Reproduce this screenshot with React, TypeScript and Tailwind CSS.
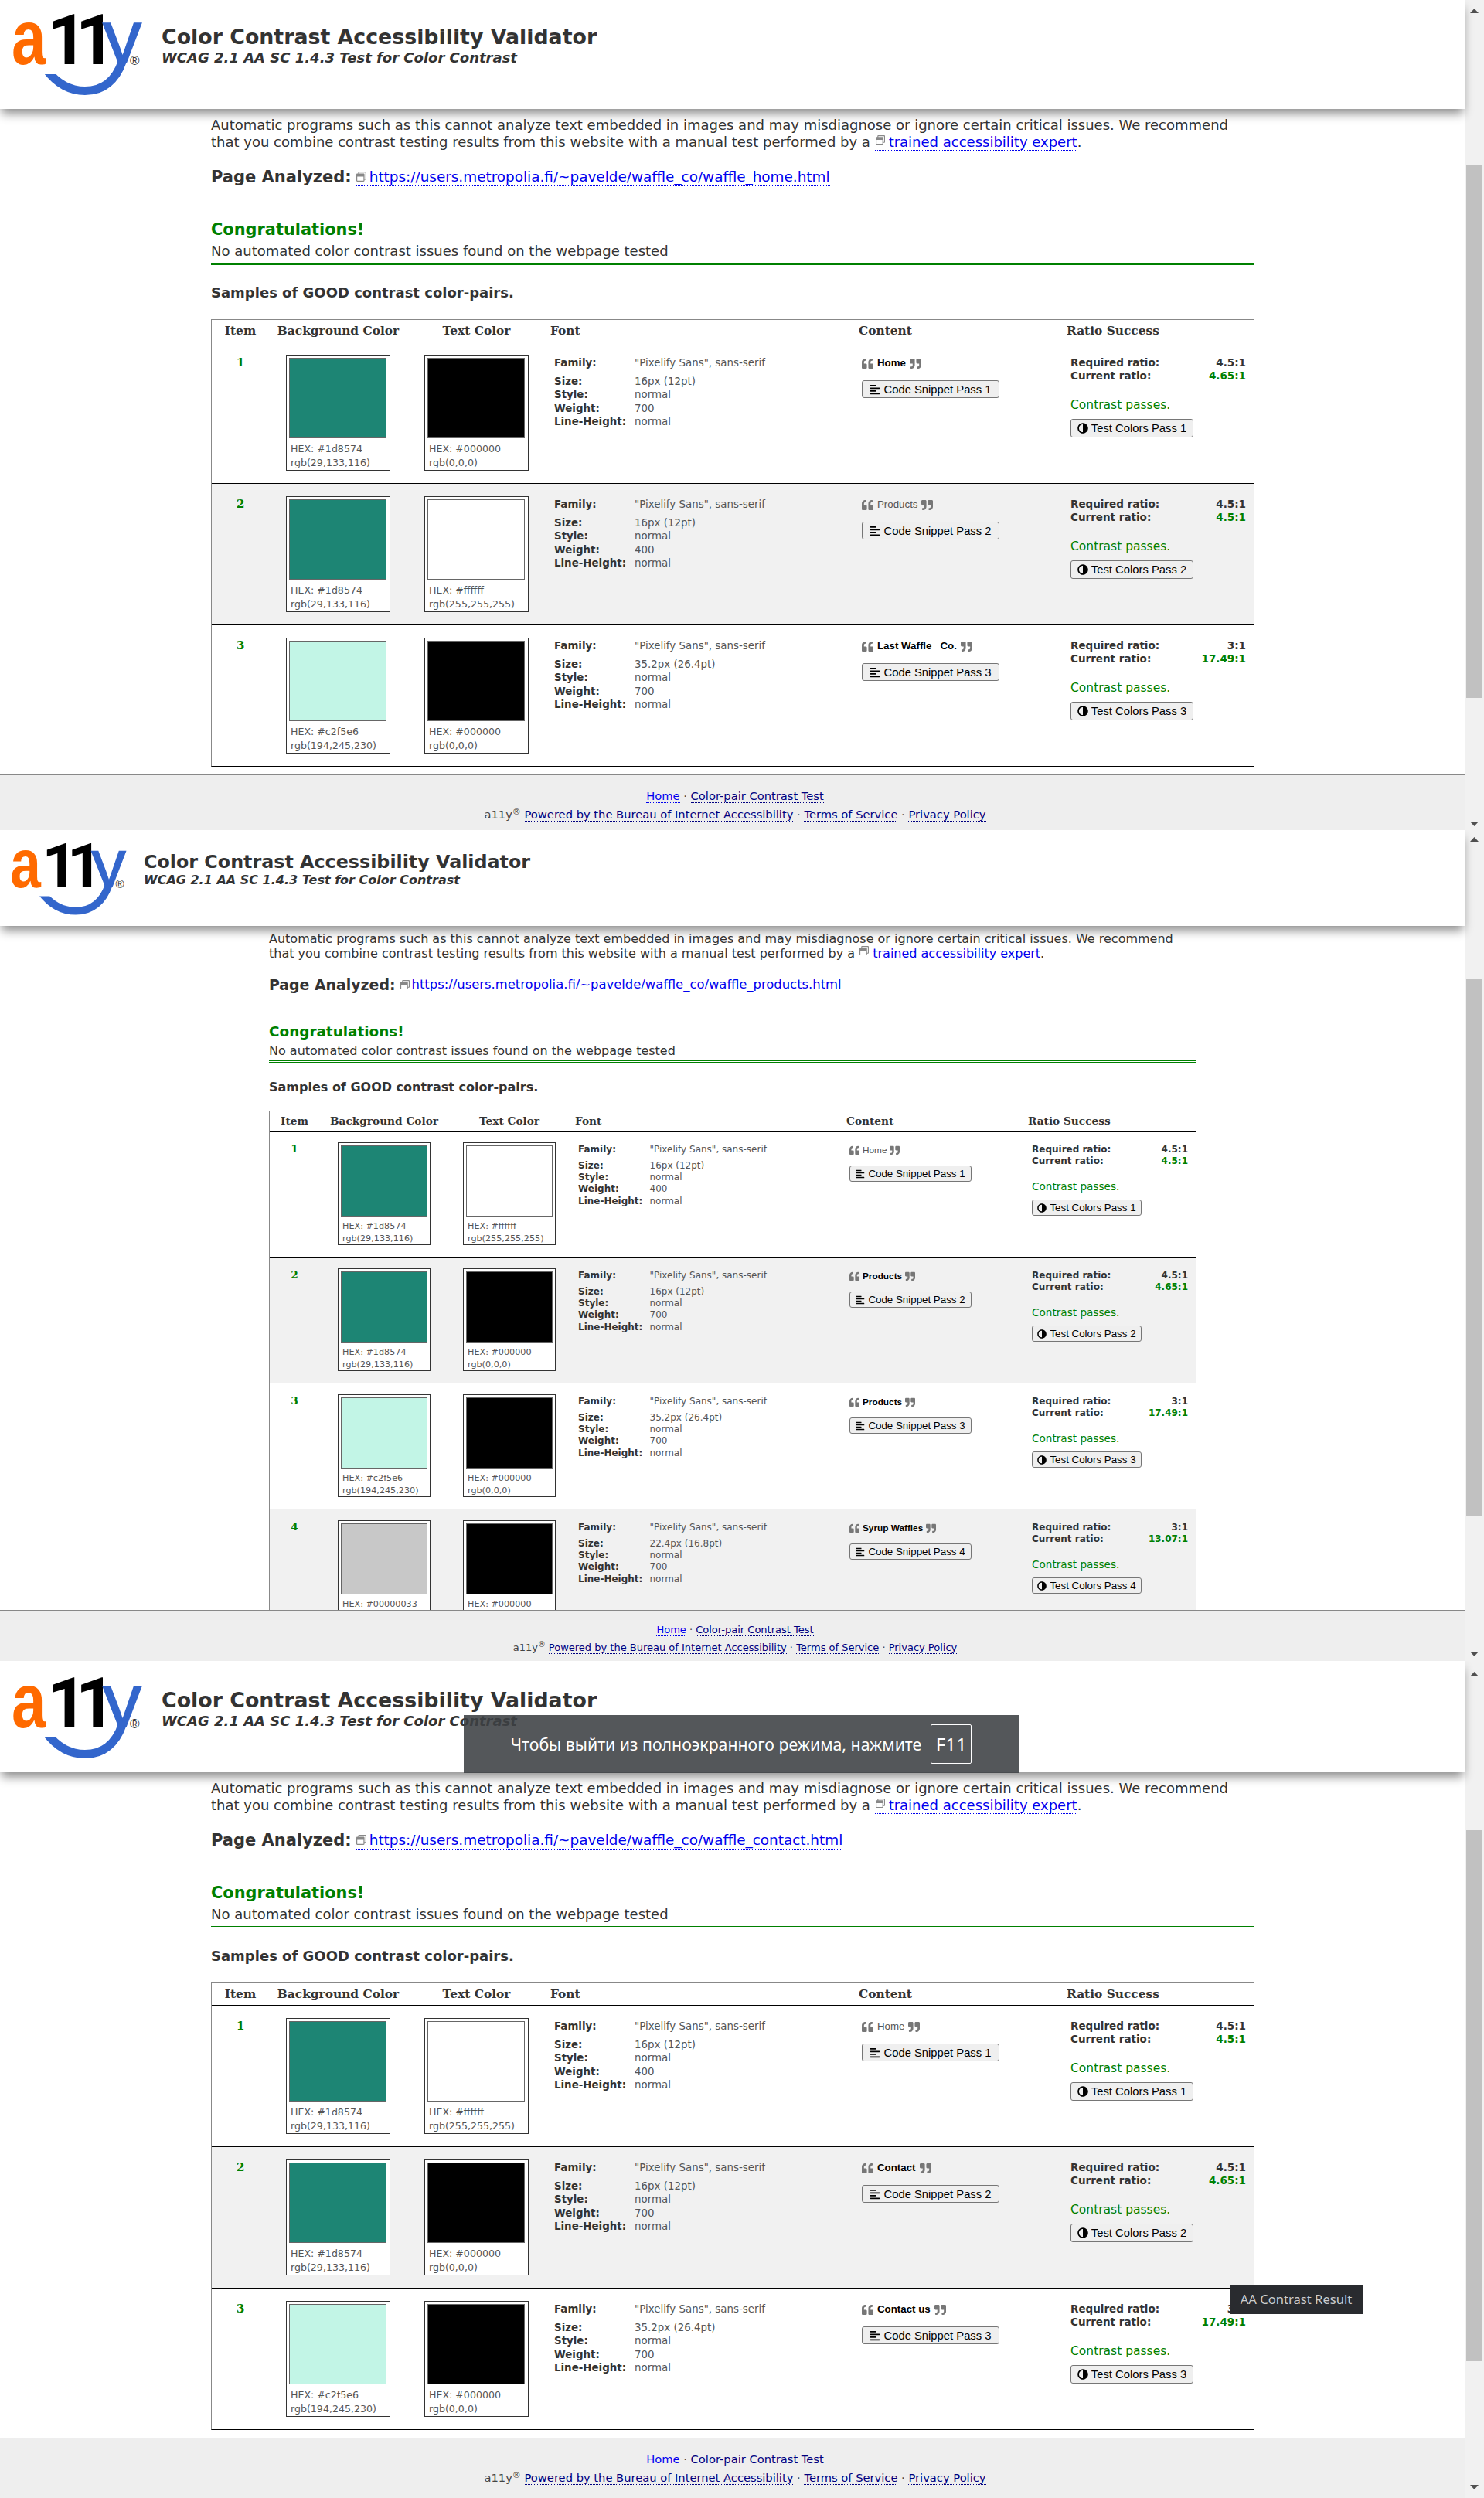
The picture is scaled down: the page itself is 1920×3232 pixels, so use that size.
import React from 'react';
import { FaAdjust, FaAlignLeft, FaQuoteLeft, FaQuoteRight, FaRegWindowRestore } from 'react-icons/fa';

type Sample = {
  bg: string;
  bgHex: string;
  bgRgb: string;
  fg: string;
  fgHex: string;
  fgRgb: string;
  size: string;
  weight: string;
  text: string;
  required: string;
  current: string;
};

const SWATCH_GREEN = { bg: 'bg-[#1d8574]', bgHex: '#1d8574', bgRgb: 'rgb(29,133,116)' };
const SWATCH_MINT = { bg: 'bg-[#c2f5e6]', bgHex: '#c2f5e6', bgRgb: 'rgb(194,245,230)' };
const FG_BLACK = { fg: 'bg-black', fgHex: '#000000', fgRgb: 'rgb(0,0,0)' };
const FG_WHITE = { fg: 'bg-white', fgHex: '#ffffff', fgRgb: 'rgb(255,255,255)' };

const bold16 = (text: string): Sample => ({ ...SWATCH_GREEN, ...FG_BLACK, size: '16px (12pt)', weight: '700', text, required: '4.5:1', current: '4.65:1' });
const plain16 = (text: string): Sample => ({ ...SWATCH_GREEN, ...FG_WHITE, size: '16px (12pt)', weight: '400', text, required: '4.5:1', current: '4.5:1' });
const mint35 = (text: string): Sample => ({ ...SWATCH_MINT, ...FG_BLACK, size: '35.2px (26.4pt)', weight: '700', text, required: '3:1', current: '17.49:1' });

const large = {
  wrap: 'pl-[273px] w-[1350px] pt-[10px] text-[18px] leading-[22px]',
  logo: 'w-[190px] h-[130px]',
  titleBox: 'ml-[19px] pt-[30px]',
  title: 'text-[26.8px] leading-[36px]',
  sub: 'text-[18px] leading-[18px] mt-[0px]',
  analyzed: 'mt-[23px] h-[22px]',
  analyzedLabel: 'text-[21px]',
  analyzedLink: 'text-[18.4px]',
  analyzedIcon: 'w-[13px] h-[13px] mr-[4px]',
  congrats: 'mt-[44px] text-[20.9px] leading-[26px]',
  none: 'mt-[4px] pb-[4px]',
  samples: 'mt-[25px] text-[18px] leading-[22px]',
  table: 'mt-[23px] w-[1350px]',
  head: 'h-[28px] text-[15.4px]',
  grid: 'grid-cols-[74px_179px_179px_397px_272px_247px]',
  font: 'pl-[6px]',
  content: 'pl-[8px]',
  ratio: 'pl-[5px]',
  row: 'h-[183px]',
  num: 'pt-[15px] text-[15.4px]',
  card: 'w-[135px] h-[150px] mt-[16px]',
  swatch: 'w-[126px] h-[104px]',
  hex: 'text-[12.6px] leading-[18px] pt-[5px] pl-[2px]',
  fontCol: 'pl-[11px] pt-[18px] text-[13.4px] leading-[17.5px]',
  fontLabel: 'w-[104px]',
  family: 'mb-[6px]',
  contentCol: 'pl-[11px] pt-[18px]',
  quoted: 'h-[18px] text-[13.3px]',
  quote: 'w-[17px] h-[15px] mx-[4px]',
  snippet: 'mt-[13px] ml-[1px] w-[178px] h-[23px] text-[14.8px]',
  ratioCol: 'pl-[10px] pr-[10px] pt-[18px] text-[13.5px] leading-[17px]',
  passes: 'mt-[20px] text-[15.5px] leading-[18px]',
  test: 'mt-[9px] w-[159px] h-[24px] text-[14.8px]',
  btnIcon: 'w-[14px] h-[14px] mr-[4px]',
  footer: 'pt-[15px] text-[14.7px] leading-[24px]',
};

const small: typeof large = {
  wrap: 'pl-[348px] w-[1200px] pt-[7px] text-[16px] leading-[19px]',
  logo: 'w-[169px] h-[116px]',
  titleBox: 'ml-[17px] pt-[25px]',
  title: 'text-[23.8px] leading-[32px]',
  sub: 'text-[16px] leading-[16px] mt-[0px]',
  analyzed: 'mt-[21px] h-[20px]',
  analyzedLabel: 'text-[18.9px]',
  analyzedLink: 'text-[16.4px]',
  analyzedIcon: 'w-[12px] h-[12px] mr-[3px]',
  congrats: 'mt-[39px] text-[18.4px] leading-[23px]',
  none: 'mt-[4px] pb-[3px]',
  samples: 'mt-[22px] text-[16px] leading-[19px]',
  table: 'mt-[21px] w-[1200px]',
  head: 'h-[25px] text-[13.7px]',
  grid: 'grid-cols-[64px_168px_156px_353px_238px_219px]',
  font: 'pl-[7px]',
  content: 'pl-[5px]',
  ratio: 'pl-[2px]',
  row: 'h-[163px]',
  num: 'pt-[13px] text-[13.7px]',
  card: 'w-[120px] h-[133px] mt-[14px]',
  swatch: 'w-[112px] h-[92px]',
  hex: 'text-[11.2px] leading-[16px] pt-[5px] pl-[2px]',
  fontCol: 'pl-[11px] pt-[16px] text-[12px] leading-[15.3px]',
  fontLabel: 'w-[92.5px]',
  family: 'mb-[5.5px]',
  contentCol: 'pl-[8px] pt-[16px]',
  quoted: 'h-[16px] text-[11.8px]',
  quote: 'w-[15px] h-[13px] mx-[3px]',
  snippet: 'mt-[12px] ml-[1px] w-[158px] h-[21px] text-[13.33px]',
  ratioCol: 'pl-[7px] pr-[10px] pt-[16px] text-[12px] leading-[15px]',
  passes: 'mt-[17px] text-[13.6px] leading-[16px]',
  test: 'mt-[9px] w-[142px] h-[21px] text-[13.33px]',
  btnIcon: 'w-[12px] h-[12px] mr-[4px]',
  footer: 'pt-[13px] text-[13px] leading-[23px]',
};

type Sizes = typeof large;

const Logo = ({ className, id }: { className: string; id: string }) => (
  <svg viewBox="0 0 190 130" className={`${className} shrink-0`}>
    <defs>
      <clipPath id={`${id}-y`}>
        <rect x="120" y="0" width="70" height="82" />
      </clipPath>
      <clipPath id={`${id}-arc`}>
        <path d="M0 96H125V60H190V130H0Z" />
      </clipPath>
    </defs>
    <text transform="translate(15 83) scale(0.8 1)" fontFamily="Liberation Sans" fontWeight="700" fontSize="100" fill="#ff6a00">a</text>
    <text x="61" y="83" fontFamily="Roboto" fontWeight="700" fontSize="90" fill="#000" letterSpacing="-15">11</text>
    <text x="133" y="83" fontFamily="Liberation Sans" fontSize="100" fontWeight="400" fill="#3366cc" stroke="#3366cc" strokeWidth="1.5" clipPath={`url(#${id}-y)`}>y</text>
    <path d="M60 90 C 75 110, 92 117.5, 110 117.5 C 134 117.5, 150 103, 158 80" fill="none" stroke="#3366cc" strokeWidth="11" clipPath={`url(#${id}-arc)`} />
    <text x="168" y="84" fontFamily="Liberation Sans" fontSize="17" fill="#333">®</text>
  </svg>
);

const Swatch = ({ s, color, hex, rgb }: { s: Sizes; color: string; hex: string; rgb: string }) => (
  <div className={`${s.card} mx-auto bg-white border border-[#333] p-[3px] overflow-hidden`}>
    <div className={`${s.swatch} ${color} border border-[#666]`} />
    <div className={`${s.hex} text-[#555] whitespace-nowrap`}>
      <div>HEX: {hex}</div>
      <div>{rgb}</div>
    </div>
  </div>
);

const ActionButton = ({ icon, label, className }: { icon: React.ReactNode; label: string; className: string }) => (
  <button className={`${className} flex items-center justify-center rounded-[3px] border border-[#767676] bg-[#efefef] text-black font-['Liberation_Sans',sans-serif] whitespace-nowrap`}>
    {icon}
    {label}
  </button>
);

const Row = ({ s, item, n }: { s: Sizes; item: Sample; n: number }) => (
  <div className={`${s.row} ${s.grid} grid border-t border-black ${n % 2 === 0 ? 'bg-[#f1f1f1]' : 'bg-white'}`}>
    <div className={`${s.num} text-center font-bold text-[#008000] font-['DejaVu_Serif',serif]`}>{n}</div>
    <div>
      <Swatch s={s} color={item.bg} hex={item.bgHex} rgb={item.bgRgb} />
    </div>
    <div>
      <Swatch s={s} color={item.fg} hex={item.fgHex} rgb={item.fgRgb} />
    </div>
    <div className={s.fontCol}>
      {[
        ['Family:', '"Pixelify Sans", sans-serif'],
        ['Size:', item.size],
        ['Style:', 'normal'],
        ['Weight:', item.weight],
        ['Line-Height:', 'normal'],
      ].map(([label, value], i) => (
        <div key={label} className={`flex ${i === 0 ? s.family : ''}`}>
          <span className={`${s.fontLabel} font-bold shrink-0`}>{label}</span>
          <span className="text-[#555]">{value}</span>
        </div>
      ))}
    </div>
    <div className={s.contentCol}>
      <div className={`${s.quoted} flex items-center font-['Liberation_Sans',sans-serif] ${item.weight === '700' ? 'font-bold text-black' : 'font-normal text-[#555]'}`}>
        <FaQuoteLeft className={`${s.quote} !ml-0 text-[#777]`} />
        <span className="whitespace-pre">{item.text}</span>
        <FaQuoteRight className={`${s.quote} text-[#777]`} />
      </div>
      <ActionButton className={s.snippet} icon={<FaAlignLeft className={s.btnIcon} />} label={`Code Snippet Pass ${n}`} />
    </div>
    <div className={s.ratioCol}>
      <div className="flex justify-between font-bold">
        <span>Required ratio:</span>
        <span>{item.required}</span>
      </div>
      <div className="flex justify-between font-bold">
        <span>Current ratio:</span>
        <span className="text-[#008000]">{item.current}</span>
      </div>
      <div className={`${s.passes} text-[#008000]`}>Contrast passes.</div>
      <ActionButton className={s.test} icon={<FaAdjust className={`${s.btnIcon} -scale-x-100`} />} label={`Test Colors Pass ${n}`} />
    </div>
  </div>
);

const Arrow = ({ down, className }: { down?: boolean; className: string }) => (
  <svg viewBox="0 0 11 6" className={`${className} w-[11px] h-[6px] mx-auto shrink-0`}>
    <path d={down ? 'M0 0H11L5.5 6Z' : 'M0 6H11L5.5 0Z'} fill="#505050" />
  </svg>
);

const Scrollbar = ({ top, thumb, bottom }: { top: string; thumb: string; bottom: string }) => (
  <div className="w-[25px] shrink-0 bg-[#f1f1f1] flex flex-col">
    <Arrow className={top} />
    <div className={`${thumb} w-[21px] mx-auto bg-[#c1c1c1] shrink-0`} />
    <Arrow down className={`mt-auto ${bottom}`} />
  </div>
);

const Footer = ({ s, height }: { s: Sizes; height: string }) => (
  <footer className={`${s.footer} ${height} shrink-0 bg-[#eeeeee] border-t border-[#888] text-center pl-[7px] text-[#444] whitespace-nowrap`}>
    <div>
      <a className="text-[#0000ee] border-b border-dotted border-[#0000ee]">Home</a>
      {' · '}
      <a className="text-[#000080] border-b border-dotted border-[#000080]">Color-pair Contrast Test</a>
    </div>
    <div>
      <span>a11y<sup>®</sup></span>{' '}
      <a className="text-[#000080] border-b border-dotted border-[#000080]">Powered by the Bureau of Internet Accessibility</a>
      {' · '}
      <a className="text-[#000080] border-b border-dotted border-[#000080]">Terms of Service</a>
      {' · '}
      <a className="text-[#000080] border-b border-dotted border-[#000080]">Privacy Policy</a>
    </div>
  </footer>
);

type PanelProps = {
  id: string;
  s: Sizes;
  height: string;
  headerClass: string;
  footerHeight: string;
  url: string;
  rows: Sample[];
  bar: { top: string; thumb: string; bottom: string };
  children?: React.ReactNode;
};

const Panel = ({ id, s, height, headerClass, footerHeight, url, rows, bar, children }: PanelProps) => (
  <section className={`${height} relative flex overflow-hidden bg-white`}>
    <div className="flex-1 min-w-0 flex flex-col">
      <header className={`${headerClass} relative z-10 shrink-0 flex bg-white shadow-[0_8px_12px_-2px_rgba(0,0,0,0.45)]`}>
        <Logo id={id} className={s.logo} />
        <div className={s.titleBox}>
          <h1 className={`${s.title} font-bold text-[#333]`}>Color Contrast Accessibility Validator</h1>
          <h2 className={`${s.sub} font-bold italic text-[#333]`}>WCAG 2.1 AA SC 1.4.3 Test for Color Contrast</h2>
        </div>
      </header>
      <main className="flex-1 min-h-0 overflow-hidden">
        <div className={`${s.wrap} box-content text-[#333]`}>
          <p className="whitespace-nowrap">
            Automatic programs such as this cannot analyze text embedded in images and may misdiagnose or ignore certain critical issues. We recommend
            <br />
            that you combine contrast testing results from this website with a manual test performed by a{' '}
            <a className="text-[#0000ee] border-b border-dotted border-[#0000ee]">
              <FaRegWindowRestore className="inline w-[12px] h-[12px] ml-[1px] mr-[5px] align-[3px] text-[#888]" />
              trained accessibility expert
            </a>
            .
          </p>
          <div className={`${s.analyzed} flex items-center whitespace-nowrap`}>
            <span className={`${s.analyzedLabel} font-bold mr-[6px]`}>Page Analyzed:</span>
            <a className={`${s.analyzedLink} flex items-center text-[#0000ee] border-b border-dotted border-[#0000ee]`}>
              <FaRegWindowRestore className={`${s.analyzedIcon} text-[#888]`} />
              {url}
            </a>
          </div>
          <div className={`${s.congrats} font-bold text-[#008000]`}>Congratulations!</div>
          <div className={`${s.none} border-b-[3px] border-double border-[#008000]`}>No automated color contrast issues found on the webpage tested</div>
          <div className={`${s.samples} font-bold`}>Samples of GOOD contrast color-pairs.</div>
          <div className={`${s.table} border border-[#888] border-b-black`}>
            <div className={`${s.head} ${s.grid} grid items-center font-bold font-['DejaVu_Serif',serif]`}>
              <div className="text-center">Item</div>
              <div className="text-center">Background Color</div>
              <div className="text-center">Text Color</div>
              <div className={s.font}>Font</div>
              <div className={s.content}>Content</div>
              <div className={s.ratio}>Ratio Success</div>
            </div>
            {rows.map((item, i) => (
              <Row key={i} s={s} item={item} n={i + 1} />
            ))}
          </div>
        </div>
      </main>
      <Footer s={s} height={footerHeight} />
    </div>
    <Scrollbar {...bar} />
    {children}
  </section>
);

export default function App() {
  return (
    <div className="w-[1920px] font-['DejaVu_Sans',sans-serif]">
      <Panel
        id="home"
        s={large}
        height="h-[1074px]"
        headerClass="h-[141px]"
        footerHeight="h-[72px]"
        url="https://users.metropolia.fi/~pavelde/waffle_co/waffle_home.html"
        rows={[bold16('Home'), plain16('Products'), mint35('Last Waffle   Co.')]}
        bar={{ top: 'mt-[11px]', thumb: 'mt-[197px] h-[689px]', bottom: 'mb-[5px]' }}
      />
      <Panel
        id="products"
        s={small}
        height="h-[1075px]"
        headerClass="h-[124px]"
        footerHeight="h-[66px]"
        url="https://users.metropolia.fi/~pavelde/waffle_co/waffle_products.html"
        rows={[
          plain16('Home'),
          bold16('Products'),
          mint35('Products'),
          {
            bg: 'bg-[#c8c8c8]',
            bgHex: '#00000033',
            bgRgb: 'rgba(0,0,0,0.2)',
            ...FG_BLACK,
            size: '22.4px (16.8pt)',
            weight: '700',
            text: 'Syrup Waffles',
            required: '3:1',
            current: '13.07:1',
          },
        ]}
        bar={{ top: 'mt-[9px]', thumb: 'mt-[178px] h-[694px]', bottom: 'mb-[6px]' }}
      />
      <Panel
        id="contact"
        s={large}
        height="h-[1083px]"
        headerClass="h-[144px] pt-[3px]"
        footerHeight="h-[78px]"
        url="https://users.metropolia.fi/~pavelde/waffle_co/waffle_contact.html"
        rows={[plain16('Home'), bold16('Contact'), mint35('Contact us')]}
        bar={{ top: 'mt-[14px]', thumb: 'mt-[199px] h-[687px]', bottom: 'mb-[11px]' }}
      >
        <div className="absolute z-20 left-[600px] top-[70px] w-[718px] h-[75px] bg-[#3c4043e0] flex items-center justify-center gap-[12px] text-white font-['Noto_Sans',sans-serif] text-[21.3px]">
          <span>Чтобы выйти из полноэкранного режима, нажмите</span>
          <span className="w-[53px] h-[51px] border border-white rounded-[2px] flex items-center justify-center text-[24px]">F11</span>
        </div>
        <div className="absolute z-20 left-[1591px] top-[808px] w-[172px] h-[37px] bg-[#292b2f] flex items-center justify-center text-[#cccccc] font-['Noto_Sans',sans-serif] text-[16.6px]">
          AA Contrast Result
        </div>
      </Panel>
    </div>
  );
}
